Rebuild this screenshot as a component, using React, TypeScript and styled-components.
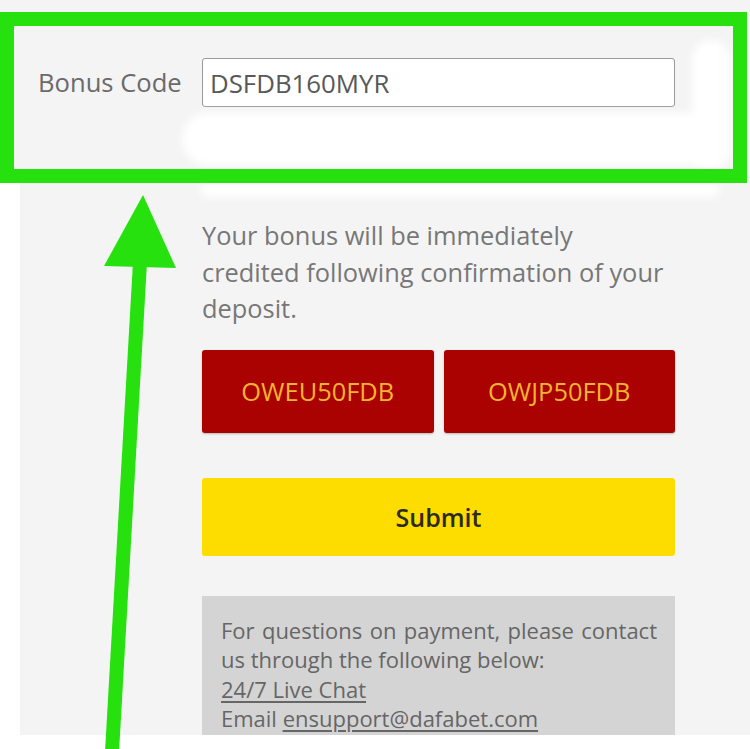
import React from "react";
import styled, { createGlobalStyle } from "styled-components";

const GlobalStyle = createGlobalStyle`
  html, body { margin: 0; padding: 0; background: #ffffff; }
  body { font-family: "Open Sans", "Noto Sans", sans-serif; }
  * { box-sizing: border-box; }
`;

const Page = styled.div`
  position: relative;
  width: 750px;
  height: 749px;
  overflow: hidden;
  background: #ffffff;
`;

const TopSection = styled.section`
  background: #f4f4f4;
  height: 183px;
  display: flex;
  align-items: flex-start;
  padding-top: 58px;
`;

const BonusRow = styled.div`
  display: grid;
  grid-template-columns: 164px 473px;
  align-items: center;
  padding-left: 38px;
`;

const Label = styled.label`
  font-size: 25.6px;
  color: #6a6a6a;
  line-height: 1;
`;

const CodeInput = styled.div`
  height: 49px;
  background: #ffffff;
  border: 1.5px solid #9a9a9a;
  border-radius: 3px;
  display: flex;
  align-items: center;
  padding-left: 7px;
  font-size: 25.8px;
  color: #585858;
`;

const Panel = styled.main`
  margin-left: 20px;
  background: #f4f4f4;
  height: 552px;
  overflow: hidden;
  padding: 34px 0 0 182px;
  display: flex;
  flex-direction: column;
`;

const Column = styled.div`
  width: 473px;
  display: flex;
  flex-direction: column;
`;

const Notice = styled.p`
  margin: 0;
  font-size: 25.4px;
  line-height: 36.5px;
  color: #777777;
  white-space: nowrap;
`;

const CodeButtons = styled.div`
  display: grid;
  grid-template-columns: 1fr 1fr;
  gap: 10px;
  margin-top: 23px;
`;

const CodeButton = styled.button`
  height: 83px;
  border: none;
  border-radius: 3px;
  background: #aa0101;
  color: #f2b332;
  font-family: inherit;
  font-size: 25.4px;
  box-shadow: 0 1px 2px rgba(0, 0, 0, 0.25);
  padding: 0;
`;

const SubmitButton = styled.button`
  margin-top: 45px;
  height: 78px;
  border: none;
  border-radius: 3px;
  background: #fddc00;
  color: #2e2a1a;
  font-family: inherit;
  font-size: 25px;
  font-weight: 600;
  padding: 0;
`;

const InfoBox = styled.div`
  margin-top: 40px;
  background: #d4d4d4;
  padding: 20px 18px 20px 19px;
  font-size: 22px;
  line-height: 29.5px;
  color: #666666;
`;

const InfoLine = styled.div`
  text-align: justify;
`;

const Link = styled.a`
  color: #666666;
  text-decoration: underline;
  text-underline-offset: 3px;
  text-decoration-thickness: 1.5px;
`;

const Highlight = styled.div`
  position: absolute;
  left: 0;
  top: 12px;
  width: 747px;
  height: 171px;
  border: 14px solid #26e10e;
  pointer-events: none;
`;

const Smudge = styled.div<{ $l: number; $t: number; $w: number; $h: number }>`
  position: absolute;
  left: ${(p) => p.$l}px;
  top: ${(p) => p.$t}px;
  width: ${(p) => p.$w}px;
  height: ${(p) => p.$h}px;
  background: #ffffff;
  border-radius: 30px;
  filter: blur(4px);
  pointer-events: none;
`;

const ArrowLayer = styled.svg`
  position: absolute;
  left: 0;
  top: 0;
  pointer-events: none;
`;

export default function App() {
  return (
    <>
      <GlobalStyle />
      <Page>
        <TopSection>
          <BonusRow>
            <Label>Bonus Code</Label>
            <CodeInput>DSFDB160MYR</CodeInput>
          </BonusRow>
        </TopSection>
        <Panel>
          <Column>
            <Notice>
              Your bonus will be immediately
              <br />
              credited following confirmation of your
              <br />
              deposit.
            </Notice>
            <CodeButtons>
              <CodeButton>OWEU50FDB</CodeButton>
              <CodeButton>OWJP50FDB</CodeButton>
            </CodeButtons>
            <SubmitButton>Submit</SubmitButton>
            <InfoBox>
              <InfoLine>
                For questions on payment, please contact us through the following below:
              </InfoLine>
              <div>
                <Link>24/7 Live Chat</Link>
              </div>
              <div>
                Email <Link>ensupport@dafabet.com</Link>
              </div>
            </InfoBox>
          </Column>
        </Panel>
        <Smudge $l={182} $t={113} $w={538} $h={52} />
        <Smudge $l={692} $t={40} $w={38} $h={130} />
        <Smudge $l={200} $t={183} $w={520} $h={14} />
        <Highlight />
        <ArrowLayer width="750" height="749" viewBox="0 0 750 749">
          <line x1="140" y1="262" x2="112" y2="752" stroke="#26e10e" strokeWidth="14" />
          <polygon points="143,195 104,266 176,268" fill="#26e10e" />
        </ArrowLayer>
      </Page>
    </>
  );
}
